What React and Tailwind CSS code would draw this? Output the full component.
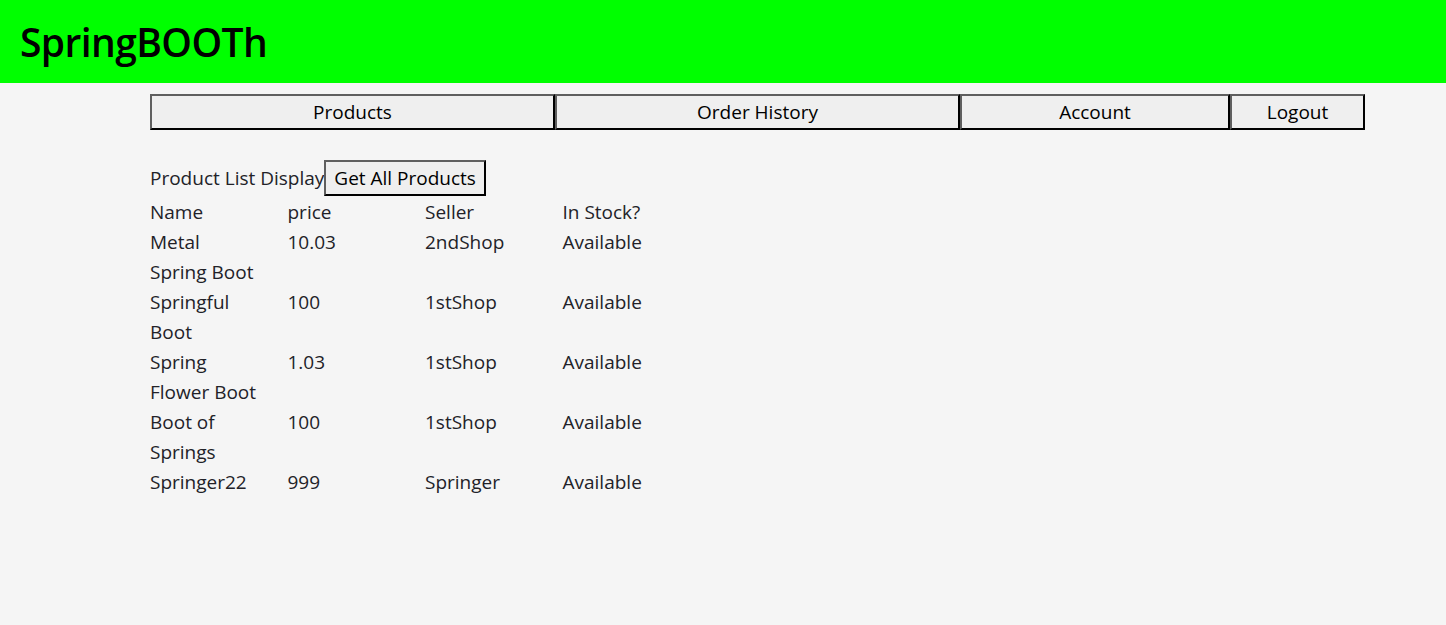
import React from 'react';

const NAV = [
  { label: 'Products', w: 'w-[405px]' },
  { label: 'Order History', w: 'w-[405px]' },
  { label: 'Account', w: 'w-[270px]' },
  { label: 'Logout', w: 'w-[135px]' },
];

const PRODUCTS = [
  { name: 'Metal Spring Boot', price: '10.03', seller: '2ndShop', stock: 'Available' },
  { name: 'Springful Boot', price: '100', seller: '1stShop', stock: 'Available' },
  { name: 'Spring Flower Boot', price: '1.03', seller: '1stShop', stock: 'Available' },
  { name: 'Boot of Springs', price: '100', seller: '1stShop', stock: 'Available' },
  { name: 'Springer22', price: '999', seller: 'Springer', stock: 'Available' },
];

const btn = 'h-[36px] bg-[#efefef] text-black border-2 border-t-[#5f5f5f] border-l-[#5f5f5f] border-b-black border-r-black';

export default function App() {
  return (
    <div className="min-h-[625px] bg-[#f5f5f5] font-['Open_Sans',sans-serif] text-[#222228]">
      <header className="h-[83px] bg-[#00ff00] flex items-center pl-[20px]">
        <h1 className="text-[39px] font-semibold text-black leading-none tracking-[-0.6px]">SpringBOOTh</h1>
      </header>

      <nav className="ml-[150px] mt-[11px] flex">
        {NAV.map((n) => (
          <button key={n.label} className={`${btn} ${n.w} text-[19px] pt-[1px]`}>
            {n.label}
          </button>
        ))}
      </nav>

      <main className="ml-[150px] mt-[30px] text-[19px]">
        <div className="flex items-center">
          <span>Product List Display</span>
          <button className={`${btn} px-[8px] text-[19px]`}>Get All Products</button>
        </div>
        <div className="grid grid-cols-[137.5px_137.5px_137.5px_137.5px] leading-[30px] mt-[1px]">
          <div className="pr-[30px]">Name</div>
          <div>price</div>
          <div>Seller</div>
          <div>In Stock?</div>
          {PRODUCTS.map((p) => (
            <React.Fragment key={p.name}>
              <div className="pr-[30px]">{p.name}</div>
              <div>{p.price}</div>
              <div>{p.seller}</div>
              <div>{p.stock}</div>
            </React.Fragment>
          ))}
        </div>
      </main>
    </div>
  );
}
